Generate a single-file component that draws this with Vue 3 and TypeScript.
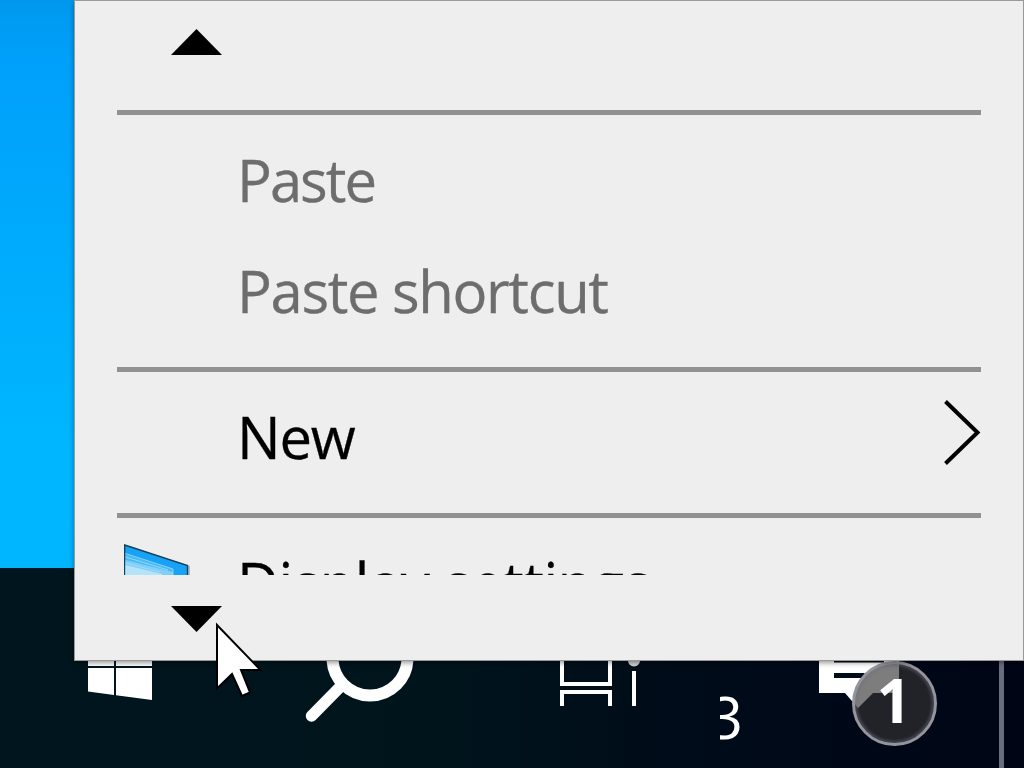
<template>
  <div class="desktop">
    <div class="wallpaper"></div>

    <!-- Taskbar -->
    <div class="taskbar">
      <svg class="start" width="64" height="107" viewBox="88 661 64 107">
        <path fill="#fff" d="M88 655H114V695L88 691.5ZM116 655H152V700L116 695.2Z" />
        <path fill="#00131b" d="M88 666h64v2h-64z" />
      </svg>

      <svg class="search" width="112" height="107" viewBox="304 661 112 107" fill="none" stroke="#fff">
        <circle cx="370" cy="658" r="37.5" stroke-width="12" />
        <path d="M342 685L311.500 716" stroke-width="11.500" stroke-linecap="round" />
      </svg>

      <svg class="task-view" width="80" height="107" viewBox="560 661 80 107">
        <path fill="none" stroke="#fff" stroke-width="4" d="M562 650V684H610V650M562 706V692H610V706M634 671V706" />
        <circle cx="634" cy="660.500" r="6" fill="#d4d7d9" />
      </svg>

      <div class="clock"><span>3</span></div>

      <div class="notifications">
        <svg width="80" height="60" viewBox="819 661 80 60">
          <path fill="#fff" d="M819 655H899V693H873L858 708L845 693H819Z" />
          <path fill="#000b19" d="M834 661h50v1.500h-50zM834 673h31l-3 5h-28z" />
        </svg>
        <div class="badge">
          <span>1</span>
        </div>
      </div>

      <div class="show-desktop"></div>
    </div>

    <!-- Context menu -->
    <div class="menu">
      <div class="scroll up">
        <svg width="52" height="26" viewBox="0 0 52 26"><path d="M0 26L25.500 0L51 26Z" /></svg>
      </div>

      <div class="items">
        <template v-for="(item, idx) in items" :key="idx">
          <div v-if="item.separator" class="separator"></div>
          <div v-else class="item" :class="{ disabled: item.disabled }">
            <div class="icon">
              <svg v-if="item.icon" width="70" height="68" viewBox="0 0 70 68">
                <path d="M3 2L66 22V68H3Z" fill="#b6babd" />
                <path d="M0.700 1L63.500 21.500V67H0.700Z" fill="#18a2f5" stroke="#17405c" stroke-width="1.400" />
                <path d="M1.500 10L49 25V60H1.500Z" fill="#48baf6" />
                <path d="M1.500 16L49 28V60H1.500Z" fill="#80cff7" />
                <path d="M1.500 21L38 30V60H1.500Z" fill="#b4e3fa" />
                <path d="M1.500 9.500L49 25V60M1.500 13L44 26M1.500 19L36 28" fill="none" stroke="#a4ddfb" stroke-width="0.800" />
              </svg>
            </div>
            <span class="label" :style="{ letterSpacing: item.tracking + 'px' }">{{ item.label }}</span>
            <svg v-if="item.submenu" class="chevron" width="38" height="66" viewBox="0 0 38 66">
              <path d="M2.500 1.500L34.500 32.500L2.500 63.500" fill="none" stroke="#000" stroke-width="4" />
            </svg>
          </div>
        </template>
      </div>

      <div class="scroll down">
        <svg width="52" height="26" viewBox="0 0 52 26"><path d="M0 0L25.500 26L51 0Z" /></svg>
      </div>
    </div>

    <!-- Mouse pointer -->
    <svg class="cursor" width="50" height="78" viewBox="0 0 50 78">
      <path d="M2 3V66.500L17 52L27 74L35 70.500L26 48H45.500Z" fill="#fff" stroke="#000" stroke-width="2" />
    </svg>
  </div>
</template>

<script setup lang="ts">
interface MenuItem {
  label?: string;
  tracking?: number;
  separator?: boolean;
  disabled?: boolean;
  submenu?: boolean;
  icon?: boolean;
}

const items: MenuItem[] = [
  { separator: true },
  { label: 'Paste', tracking: -2, disabled: true },
  { label: 'Paste shortcut', tracking: -1.35, disabled: true },
  { separator: true },
  { label: 'New', tracking: -1.2, submenu: true },
  { separator: true },
  { label: 'Display settings', tracking: -0.5, icon: true },
];
</script>

<style>
body {
  margin: 0;
  overflow: hidden;
}
</style>

<style scoped>
.desktop {
  position: relative;
  display: flex;
  flex-direction: column;
  width: 1024px;
  height: 768px;
  overflow: hidden;
  font-family: "Open Sans", "Noto Sans", sans-serif;
}

.wallpaper {
  height: 568px;
  background: linear-gradient(#0098ee 0, #00a0fa 60px, #00b7ff 460px, #00b5ff 100%);
}

.taskbar {
  display: flex;
  box-sizing: border-box;
  height: 200px;
  padding: 93px 0 0 88px;
  background: linear-gradient(90deg, #00151d 0, #00141c 45%, #000c19 65%, #000516 100%);
}

.taskbar > * {
  flex-shrink: 0;
}

.search {
  margin-left: 152px;
}

.task-view {
  margin-left: 144px;
}

.clock {
  display: flex;
  justify-content: flex-end;
  width: 21px;
  height: 107px;
  margin-left: 80px;
  overflow: hidden;
  color: #fff;
  font-size: 59px;
  line-height: 110px;
}

.clock span {
  margin-right: -2px;
}

.notifications {
  position: relative;
  width: 118px;
  margin-left: 78px;
}

.notifications svg {
  display: block;
}

.badge {
  position: absolute;
  top: 0;
  left: 33px;
  display: flex;
  box-sizing: border-box;
  justify-content: center;
  width: 85px;
  height: 85px;
  padding-right: 1px;
  border: 3px solid #94949d;
  border-radius: 50%;
  background: rgba(52, 52, 52, 0.64);
  box-shadow: inset 0 0 3px 2px rgba(110, 110, 125, 0.5);
  color: #fff;
  font-size: 60px;
  font-weight: 700;
  line-height: 73px;
}

.show-desktop {
  width: 5px;
  margin-left: 62px;
  background: #6a6d7d;
}

.menu {
  position: absolute;
  top: 0;
  left: 74px;
  display: flex;
  box-sizing: border-box;
  flex-direction: column;
  width: 950px;
  height: 661px;
  border: 1px solid #999;
  background: #eee;
  box-shadow: 0 2px 5px rgba(0, 0, 0, 0.4);
}

.scroll {
  box-sizing: border-box;
  padding-left: 96px;
}

.scroll svg {
  display: block;
}

.scroll.up {
  height: 94px;
  padding-top: 28px;
}

.scroll.down {
  height: 85px;
  padding-top: 31px;
}

.items {
  height: 480px;
  padding: 0 42px;
  overflow: hidden;
}

.separator {
  height: 5px;
  padding: 15px 0;
  background: #919191 content-box;
}

.item {
  display: flex;
  height: 111px;
  color: #000;
  font-size: 58px;
  line-height: 100px;
  white-space: nowrap;
}

.item.disabled {
  color: #6d6d6d;
}

.icon {
  width: 120px;
  padding: 11px 0 0 7px;
  box-sizing: border-box;
}

.icon svg {
  display: block;
}

.label {
  flex: 1;
  -webkit-text-stroke: 0.3px currentColor;
}

.chevron {
  margin-top: 13px;
}

.cursor {
  position: absolute;
  top: 622px;
  left: 215px;
}
</style>
